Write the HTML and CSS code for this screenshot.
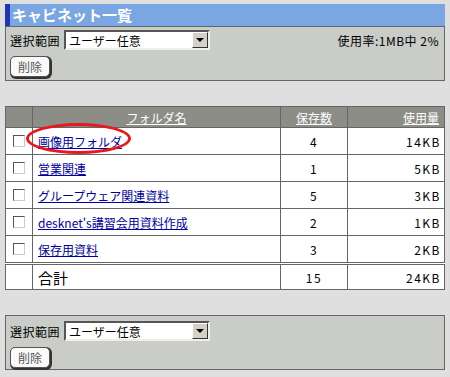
FILE: index.html
```html
<!DOCTYPE html>
<html lang="ja">
<head>
  <meta charset="UTF-8" />
  <title>キャビネット一覧</title>
  <link rel="stylesheet" href="styles.css">
</head>
<body>
<div class="title-bar">キャビネット一覧</div>
<div class="panel">
  <div class="panel-row">
    <div class="range">
      <span class="range-label">選択範囲</span>
      <span class="select-wrap">
        <select class="range-select"><option>ユーザー任意</option></select>
        <span class="select-arrow"></span>
      </span>
    </div>
    <span class="usage">使用率:1MB中 2%</span>
  </div>
  <button class="btn-delete">削除</button>
</div>

<table class="folders">
  <tr class="head">
    <th class="col-check"></th>
    <th class="col-name"><a href="#">フォルダ名</a></th>
    <th class="col-count"><a href="#">保存数</a></th>
    <th class="col-size"><a href="#">使用量</a></th>
  </tr>
  <tr>
    <td class="col-check"><input type="checkbox"></td>
    <td class="col-name"><span class="marked"><a href="#">画像用フォルダ</a></span></td>
    <td class="col-count num">4</td>
    <td class="col-size num">14KB</td>
  </tr>
  <tr>
    <td class="col-check"><input type="checkbox"></td>
    <td class="col-name"><a href="#">営業関連</a></td>
    <td class="col-count num">1</td>
    <td class="col-size num">5KB</td>
  </tr>
  <tr>
    <td class="col-check"><input type="checkbox"></td>
    <td class="col-name"><a href="#">グループウェア関連資料</a></td>
    <td class="col-count num">5</td>
    <td class="col-size num">3KB</td>
  </tr>
  <tr>
    <td class="col-check"><input type="checkbox"></td>
    <td class="col-name"><a href="#">desknet's講習会用資料作成</a></td>
    <td class="col-count num">2</td>
    <td class="col-size num">1KB</td>
  </tr>
  <tr>
    <td class="col-check"><input type="checkbox"></td>
    <td class="col-name"><a href="#">保存用資料</a></td>
    <td class="col-count num">3</td>
    <td class="col-size num">2KB</td>
  </tr>
  <tr class="total">
    <td class="col-check"></td>
    <td class="col-name total-label">合計</td>
    <td class="col-count num">15</td>
    <td class="col-size num">24KB</td>
  </tr>
</table>

<div class="panel panel-bottom">
  <div class="panel-row">
    <div class="range">
      <span class="range-label">選択範囲</span>
      <span class="select-wrap">
        <select class="range-select"><option>ユーザー任意</option></select>
        <span class="select-arrow"></span>
      </span>
    </div>
  </div>
  <button class="btn-delete">削除</button>
</div>
</body>
</html>
```

FILE: styles.css
```css
    body {
      margin: 0;
      padding: 4px 5px;
      background: #dfdfdf;
      font-family: "Noto Sans CJK JP", "DejaVu Sans", sans-serif;
      font-size: 12px;
      color: #000;
    }
    .title-bar {
      height: 22px;
      line-height: 22px;
      padding-left: 2px;
      background: #7aa6e2;
      border-left: 5px solid #2233b4;
      color: white;
      font-size: 15px;
      font-weight: bold;
      box-sizing: border-box;
    }
    .panel {
      border: 1px solid #666;
      background: #c9ccc7;
      height: 55px;
      box-sizing: border-box;
      padding: 3px 5px 0 4px;
    }
    .panel-bottom {
      margin-top: 25px;
      padding-top: 5px;
    }
    .panel-row {
      display: flex;
      justify-content: space-between;
      align-items: center;
      height: 20px;
    }
    .range {
      display: flex;
      align-items: center;
      gap: 4px;
    }
    .range-label { letter-spacing: 0.5px; }
    .select-wrap {
      position: relative;
      display: inline-block;
    }
    .range-select {
      appearance: none;
      -webkit-appearance: none;
      width: 146px;
      height: 20px;
      margin: 0;
      padding: 0 0 0 3px;
      background: white;
      border: 2px solid;
      border-color: #555 #eee #eee #555;
      font-family: inherit;
      font-size: 12px;
      color: #000;
      box-sizing: border-box;
    }
    .select-arrow {
      position: absolute;
      top: 2px;
      right: 2px;
      width: 16px;
      height: 16px;
      background: #d4d0c8;
      border: 1px solid;
      border-color: #fff #333 #333 #fff;
      box-sizing: border-box;
      pointer-events: none;
    }
    .select-arrow::after {
      content: "";
      position: absolute;
      left: 3px;
      top: 5px;
      border-left: 4px solid transparent;
      border-right: 4px solid transparent;
      border-top: 4px solid #000;
    }
    .usage { letter-spacing: 0.5px; }
    .btn-delete {
      display: block;
      margin-top: 6px;
      width: 40px;
      height: 21px;
      padding: 0;
      background: #fafafa;
      border: 1px solid #555;
      border-radius: 5px;
      box-shadow: 1px 1px 0 1px #333;
      font-family: inherit;
      font-size: 12px;
      color: #555;
    }
    .folders {
      margin-top: 25px;
      width: 440px;
      border-collapse: collapse;
      background: white;
      table-layout: fixed;
    }
    .folders th, .folders td {
      border: 1px solid #666;
      padding: 0 5px;
      height: 26px;
      font-weight: normal;
    }
    .folders .head th {
      height: 20px;
      background: #8d8d88;
    }
    .head a { color: white; }
    .col-check { width: 16px; text-align: center; }
    .col-name { width: 237px; text-align: left; }
    .col-count { width: 56px; text-align: center; }
    .col-size { text-align: right; }
    .head .col-name { text-align: center; }
    .folders td.num { letter-spacing: 1.5px; }
    .folders td.col-size { padding-right: 3px; }
    .folders td a { color: #0000a0; }
    .folders input[type=checkbox] {
      appearance: none;
      -webkit-appearance: none;
      display: block;
      margin: 0 auto;
      width: 12px;
      height: 12px;
      background: white;
      border: 1px solid;
      border-color: #555 #ccc #ccc #555;
      box-sizing: border-box;
    }
    .total td {
      border-top: 3px double #666;
      height: 24px;
    }
    .total-label {
      font-size: 15px;
      font-weight: bold;
    }
    .marked {
      position: relative;
      display: inline-block;
    }
    .marked::before {
      content: "";
      position: absolute;
      left: -12px;
      right: -9px;
      top: -10px;
      bottom: -4px;
      border: 3px solid #e8181c;
      border-radius: 50%;
    }
```
